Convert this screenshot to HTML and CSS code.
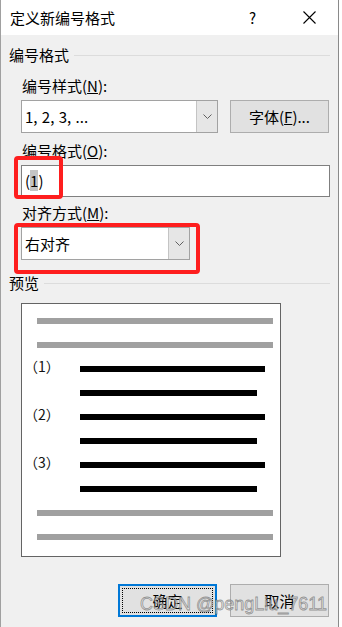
FILE: index.html
```html
<!DOCTYPE html>
<html lang="zh-CN">
<head>
  <meta charset="UTF-8">
  <title>定义新编号格式</title>
<link rel="stylesheet" href="styles.css">
</head>
<body>
<div class="screen">
  <div class="dialog">
    <div class="titlebar">
      <span class="title">定义新编号格式</span>
      <span class="help">?</span>
      <span class="close">
        <svg width="13" height="13" viewBox="0 0 13 13"><path d="M0.5 0.5 L12.5 12.5 M12.5 0.5 L0.5 12.5" stroke="#000" stroke-width="1.1" fill="none"/></svg>
      </span>
    </div>

    <div class="content">
      <div class="group-head"><span>编号格式</span></div>
      <div class="group-body">
        <div class="label label-first">编号样式(<u>N</u>):</div>
        <div class="row">
          <div class="combo combo-style">
            <span class="combo-text">1, 2, 3, ...</span>
            <span class="combo-btn"><svg width="9" height="5" viewBox="0 0 9 5"><path d="M0.5 0.5 L4.5 4.5 L8.5 0.5" stroke="#606060" fill="none"/></svg></span>
          </div>
          <button class="btn">字体(<u>F</u>)...</button>
        </div>

        <div class="label label-format">编号格式(<u>O</u>):</div>
        <div class="field">
          <span class="field-text">(<span class="sel">1</span>)</span>
          <span class="mark mark-format"></span>
        </div>

        <div class="label label-align">对齐方式(<u>M</u>):</div>
        <div class="combo combo-align">
          <span class="combo-text">右对齐</span>
          <span class="combo-btn"><svg width="9" height="5" viewBox="0 0 9 5"><path d="M0.5 0.5 L4.5 4.5 L8.5 0.5" stroke="#606060" fill="none"/></svg></span>
          <span class="mark mark-align"></span>
        </div>
      </div>

      <div class="group-head group-preview"><span>预览</span></div>
      <div class="group-body">
        <div class="preview">
          <div class="pv-row"><span class="bar bar-gray"></span></div>
          <div class="pv-row"><span class="bar bar-gray"></span></div>
          <div class="pv-row"><span class="num">（1）</span><span class="bar bar-long"></span></div>
          <div class="pv-row"><span class="num"></span><span class="bar bar-short"></span></div>
          <div class="pv-row"><span class="num">（2）</span><span class="bar bar-long"></span></div>
          <div class="pv-row"><span class="num"></span><span class="bar bar-short"></span></div>
          <div class="pv-row"><span class="num">（3）</span><span class="bar bar-long"></span></div>
          <div class="pv-row"><span class="num"></span><span class="bar bar-short"></span></div>
          <div class="pv-row"><span class="bar bar-gray"></span></div>
          <div class="pv-row"><span class="bar bar-gray"></span></div>
        </div>
      </div>

      <div class="actions">
        <button class="btn btn-default">确定</button>
        <button class="btn">取消</button>
      </div>
    </div>
  </div>
  <div class="backdrop"></div>
  <div class="watermark">CSDN @pengLiu_7611</div>
</div>
</body>
</html>
```

FILE: styles.css
```css
* {
  box-sizing: border-box;
  margin: 0;
}

body {
  font-family: "Noto Sans CJK SC", "Noto Sans", sans-serif;
  font-size: 15px;
  color: #000;
  background: #fff;
}

.screen {
  position: relative;
  display: flex;
  width: 342px;
  height: 627px;
  overflow: hidden;
}

.dialog {
  width: 339px;
  height: 627px;
  background: #f0f0f0;
  border-left: 1px solid #a0a0a0;
  border-right: 1px solid #8a8a8a;
}

.backdrop {
  flex: 1;
  background: #fff;
}

/* title bar */
.titlebar {
  display: flex;
  align-items: center;
  height: 35px;
  padding: 0 22px 0 9px;
  background: #fff;
}

.help {
  margin-left: auto;
  width: 9px;
  line-height: 20px;
}

.close {
  display: flex;
  margin-left: 45px;
}

/* body */
.content {
  padding: 0 8px;
}

.group-head {
  display: flex;
  align-items: center;
  height: 20px;
  margin-top: 10px;
  line-height: 20px;
}

.group-head::after {
  content: "";
  flex: 1;
  height: 1px;
  margin-left: 5px;
  background: #dcdcdc;
}

.group-preview {
  margin-top: 13px;
}

.group-body {
  padding-left: 12px;
}

.label {
  height: 20px;
  line-height: 20px;
  padding-left: 1px;
}

.label-first { margin-top: 11px; }
.label-format { margin-top: 8px; }
.label-align { margin-top: 6px; }

.row {
  display: flex;
  gap: 12px;
  margin-top: 4px;
}

.combo {
  position: relative;
  display: flex;
  height: 33px;
  background: #fff;
  border: 1px solid #a2a2a2;
}

.combo-style { width: 197px; }

.combo-align {
  width: 169px;
  margin-top: 4px;
}

.combo-text {
  flex: 1;
  padding-left: 3px;
  line-height: 31px;
}

.combo-style .combo-text {
  word-spacing: 1px;
}

.combo-btn {
  display: flex;
  align-items: center;
  justify-content: center;
  width: 21px;
  background: #e6e6e6;
  border-left: 1px solid #c4c4c4;
}

.btn {
  width: 99px;
  height: 33px;
  font: inherit;
  color: #000;
  background: #e1e1e1;
  border: 1px solid #adadad;
  padding: 0;
}

.field {
  position: relative;
  height: 32px;
  margin-top: 4px;
  padding-left: 3px;
  line-height: 30px;
  background: #fff;
  border: 1px solid #7f7f7f;
}

.sel {
  background: #c4c4c4;
}

/* red highlight frames drawn over the controls */
.mark {
  position: absolute;
  border: 4px solid #fe1e1e;
  border-radius: 4px;
}

.mark-format {
  left: -8px;
  top: -10px;
  width: 49px;
  height: 43px;
}

.mark-align {
  left: -8px;
  top: -5px;
  width: 186px;
  height: 51px;
}

/* preview */
.preview {
  display: flex;
  flex-direction: column;
  gap: 18px;
  width: 260px;
  height: 254px;
  margin-top: 10px;
  padding-top: 14px;
  background: #fff;
  border: 1px solid #646464;
}

.pv-row {
  display: flex;
  height: 6px;
}

.bar {
  height: 6px;
}

.bar-gray {
  width: 236px;
  margin-left: 15px;
  background: #a0a0a0;
}

.bar-long {
  width: 185px;
  background: #000;
}

.bar-short {
  width: 177px;
  background: #000;
}

.num {
  width: 56px;
  margin-left: 2px;
  height: 6px;
  font-size: 14px;
  line-height: 0;
  color: #111;
}

/* buttons */
.actions {
  display: flex;
  justify-content: flex-end;
  gap: 13px;
  margin-top: 27px;
  padding-right: 1px;
}

.btn-default {
  border: 2px solid #0078d7;
  outline: 1px dotted #000;
  outline-offset: -5px;
}

.watermark {
  position: absolute;
  right: 15px;
  bottom: 12px;
  font-family: "Liberation Sans", Arial, sans-serif;
  font-size: 18px;
  color: rgba(235, 235, 235, 0.6);
  -webkit-text-stroke: 0.8px rgba(90, 90, 90, 0.6);
  white-space: nowrap;
}
```
